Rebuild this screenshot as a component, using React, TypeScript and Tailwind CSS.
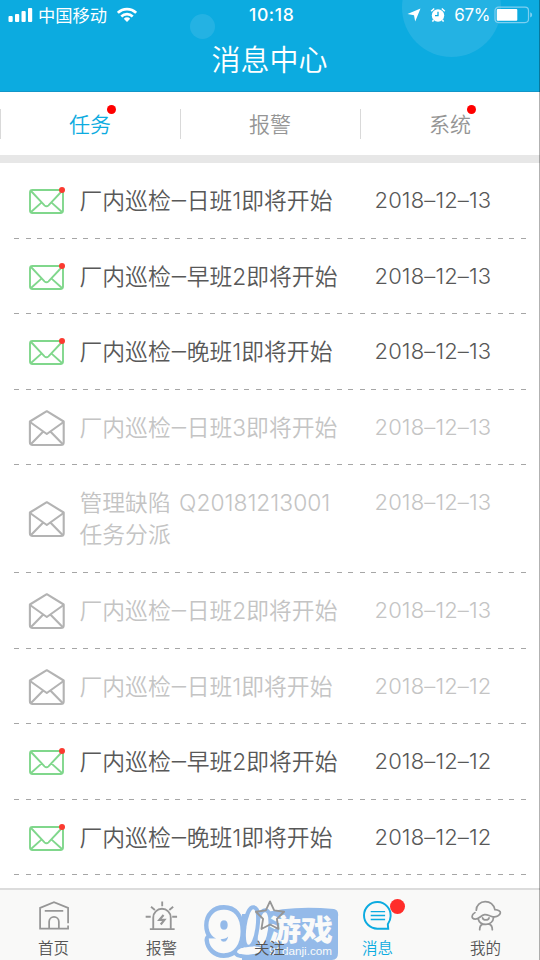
import React, { useState } from "react";
import clsx from "clsx";

interface Message {
  title: string[];
  date: string;
  read: boolean;
}

interface TabItem {
  label: string;
  dot: boolean;
}

const tabs: TabItem[] = [
  { label: "任务", dot: true },
  { label: "报警", dot: false },
  { label: "系统", dot: true },
];

const messages: Message[] = [
  { title: ["厂内巡检–日班1即将开始"], date: "2018–12–13", read: false },
  { title: ["厂内巡检–早班2即将开始"], date: "2018–12–13", read: false },
  { title: ["厂内巡检–晚班1即将开始"], date: "2018–12–13", read: false },
  { title: ["厂内巡检–日班3即将开始"], date: "2018–12–13", read: true },
  { title: ["管理缺陷 Q20181213001", "任务分派"], date: "2018–12–13", read: true },
  { title: ["厂内巡检–日班2即将开始"], date: "2018–12–13", read: true },
  { title: ["厂内巡检–日班1即将开始"], date: "2018–12–12", read: true },
  { title: ["厂内巡检–早班2即将开始"], date: "2018–12–12", read: false },
  { title: ["厂内巡检–晚班1即将开始"], date: "2018–12–12", read: false },
];

const MailIcon = () => (
  <svg width="38" height="30" viewBox="0 0 38 30" fill="none">
    <g stroke="#80d78c" strokeWidth="1.9" strokeLinejoin="round">
      <rect x="2" y="4" width="33" height="23" rx="2.5" />
      <path d="M3 5l13.5 14.3q2 2 4 0L34 5M3 26l10.7-9.6M34 26l-10.7-9.6" />
    </g>
    <circle cx="34" cy="4" r="3" fill="#fb3a30" />
  </svg>
);

const MailOpenIcon = () => (
  <svg className="my-[-4px]" width="38" height="38" viewBox="0 0 38 38" fill="none" stroke="#b3b3b3" strokeWidth="2.1" strokeLinejoin="round">
    <path d="M1.9 12.5L18.8 2.2 35.7 12.5V33.2q0 2.8-2.8 2.8H4.7Q1.9 36 1.9 33.2z" />
    <path d="M2 13l16.8 12L35.6 13M3 35l12-12.3M34.6 35l-12-12.3" />
  </svg>
);

const HomeIcon = () => (
  <svg width="36" height="36" viewBox="0 0 36 36" fill="none" stroke="#969696" strokeWidth="1.8">
    <path d="M32.5 25V9.2L18 3.4 3.7 9.2v21.2h28.8v-3.2M8.500 12.2h19M13 30v-6.5a5 5 0 0 1 10 0V30" />
  </svg>
);

const AlarmIcon = () => (
  <svg width="36" height="36" viewBox="0 0 36 36" fill="none" stroke="#969696" strokeWidth="1.9">
    <path d="M5.5 31h25.5M9 30V19a9 9 0 0 1 18 0v11M18.2 2.5v5M6.7 8l4 3.3M29.5 8l-4 3.3M1.2 18.3h5.2M28.5 18.3h5" />
    <path d="M19.6 16.5l-4.3 5h5.2l-3.8 4.7" strokeWidth="2.2" />
  </svg>
);

const StarIcon = () => (
  <svg width="36" height="36" viewBox="0 0 36 36" fill="none" stroke="#969696" strokeWidth="1.9" strokeLinejoin="round">
    <path d="M18 2.5l4.3 9.2 10.2 1.4-7.4 7.4 1.7 10.3L18 26.2l-8.8 4.6 1.7-10.3-7.4-7.4 10.2-1.4z" />
  </svg>
);

const ChatIcon = () => (
  <svg width="36" height="36" viewBox="0 0 36 36" fill="none" stroke="#0cabe0" strokeWidth="2">
    <path d="M28.5 30.5H17.5A13.7 13.7 0 1 1 31 17.5c0 3.4-1.3 6-2.9 8.5z" />
    <path d="M10.5 13h14.8M10.5 17h14.8M10.5 21h14.8" strokeWidth="1.5" />
  </svg>
);

const UserIcon = () => (
  <svg width="36" height="36" viewBox="0 0 36 36" fill="none" stroke="#969696" strokeWidth="1.8" strokeLinecap="round">
    <path d="M8 11.5C8 6.5 12 2.8 17.2 2.8c5 0 8.6 3 10 8.2 3.5.3 5.8 1.5 5.6 3.3-.3 2.5-4.3 4.6-8.3 3.8-3.5-.8-5-2.4-8-2-4 .6-5.5 4.7-9.5 4.7-2.5 0-3.7-1.8-3.2-3.6.3-1.2 1.5-2.3 2.8-3.2" />
    <path d="M10 20.5c.8 3.5 4 5.5 8 5.5s7.5-2.6 7.8-7.3M14.5 19.5c.8 2.7 5.8 2.7 6.6 0M11.5 31.5c0-3 1-4.8 3-5.7M24.5 31.5c0-3-1-4.8-3-5.7" />
  </svg>
);

const navItems = [
  { label: "首页", Icon: HomeIcon, dot: false },
  { label: "报警", Icon: AlarmIcon, dot: false },
  { label: "关注", Icon: StarIcon, dot: false },
  { label: "消息", Icon: ChatIcon, dot: true },
  { label: "我的", Icon: UserIcon, dot: false },
];

const StatusBar = () => (
  <div className="relative flex h-[30px] items-center justify-between pl-2 pr-[7px] text-white">
    <div className="flex items-center">
      <svg width="25" height="16" viewBox="0 0 25 16" fill="#fff">
        <rect x="0.5" y="9" width="4.2" height="6" rx="1" />
        <rect x="7" y="7" width="4.2" height="8" rx="1" />
        <rect x="13.5" y="4" width="4.2" height="11" rx="1" />
        <rect x="20" y="1" width="4.2" height="14" rx="1" />
      </svg>
      <span className="ml-[5px] text-[17.3px] leading-[30px]">中国移动</span>
      <svg className="ml-[10px]" width="20" height="16" viewBox="0 0 20 16" fill="none" stroke="#fff" strokeWidth="2.6">
        <path d="M.9 5.8a13 13 0 0 1 18.2 0M4.3 9.5a8 8 0 0 1 11.4 0" />
        <path d="M10 15l-3.2-3.3a4.5 4.5 0 0 1 6.4 0z" fill="#fff" stroke="none" />
      </svg>
    </div>
    <span className="absolute left-[249px] top-0 font-['Inter'] text-[17.6px] font-medium leading-[30px] tracking-[0.6px]">10:18</span>
    <div className="flex items-center">
      <svg width="14" height="14" viewBox="0 0 14 14" fill="#fff">
        <path d="M13.5.5L8.2 13.5 7 7.2.5 6z" />
      </svg>
      <svg className="ml-[9px]" width="16" height="16" viewBox="0 0 16 16" fill="none">
        <circle cx="8" cy="8.5" r="6.2" fill="#fff" />
        <path d="M1.2 4.2l3-2.7M14.8 4.2l-3-2.7M3.5 13l-1 1.7M12.5 13l1 1.7" stroke="#fff" strokeWidth="1.5" />
        <path d="M8 4.7v4H5" stroke="#0cabe0" strokeWidth="1.3" />
      </svg>
      <span className="ml-[8px] font-['Inter'] text-[17px] leading-[30px] tracking-[-0.4px]">67%</span>
      <svg className="ml-[4px]" width="39" height="18" viewBox="0 0 39 18" fill="none">
        <rect x="1" y="1.2" width="33.5" height="15.4" rx="3.5" stroke="#7dcff0" strokeWidth="1.2" />
        <rect x="2.8" y="3" width="20.5" height="11.8" rx="1" fill="#fff" />
        <path d="M36.2 6.2q2 .8 2 2.7t-2 2.7z" fill="#7dcff0" />
      </svg>
    </div>
  </div>
);

const Watermark = () => (
  <svg className="pointer-events-none absolute left-[200px] top-[9px]" width="142" height="61" viewBox="0 0 142 61">
    <path d="M60 15Q90 6 134 10q5 1 4 8v36q0 7-6 7H42V15z" fill="#94bae9" />
    <g fill="#fafaf9" stroke="#94bae9" strokeWidth="8" strokeLinejoin="round" paintOrder="stroke">
      <ellipse cx="50" cy="51.5" rx="13" ry="3.8" transform="rotate(-5 50 51)" />
      <ellipse cx="63" cy="30" rx="5" ry="17" transform="rotate(8 63 30)" />
      <ellipse cx="51" cy="28" rx="4.5" ry="18" transform="rotate(8 51 28)" />
    </g>
    <text x="8" y="52" fontSize="53" fontWeight="900" fontFamily="Inter, sans-serif" textLength="33" lengthAdjust="spacingAndGlyphs" fill="#fafaf9" stroke="#94bae9" strokeWidth="12" strokeLinejoin="round" paintOrder="stroke">9</text>
    <text x="8" y="52" fontSize="53" fontWeight="900" fontFamily="Inter, sans-serif" textLength="33" lengthAdjust="spacingAndGlyphs" fill="#fafaf9" stroke="#fafaf9" strokeWidth="2.5" aria-hidden="true">9</text>
    <text x="69" y="42" fontSize="29" fontWeight="900" fontFamily="'Noto Sans CJK SC', sans-serif" textLength="64" lengthAdjust="spacingAndGlyphs" fill="#fafaf9">游戏</text>
    <ellipse cx="50" cy="51.5" rx="13" ry="3.8" transform="rotate(-5 50 51)" fill="#fafaf9" />
    <text x="69" y="56" fontSize="11" fill="#fafaf9" fontFamily="'Liberation Sans', sans-serif" textLength="63" lengthAdjust="spacingAndGlyphs">91danji.com</text>
  </svg>
);

// the dash between the name and the shift is wider than the font gives it
const TitleLine = ({ text }: { text: string }) => {
  const [name, shift] = text.split("–");
  return (
    <div>
      {name}
      {shift && <span className="relative top-[-1px] inline-block w-[16px] scale-x-125 text-center">–</span>}
      {shift}
    </div>
  );
};

const App = () => {
  const [activeTab, setActiveTab] = useState(0);
  const [activeNav, setActiveNav] = useState(3);

  return (
    <div className="relative flex h-[960px] w-[540px] flex-col overflow-hidden bg-white font-['Noto_Sans_CJK_SC',sans-serif]">
      {/* Header */}
      <header className="relative h-[92px] shrink-0 overflow-hidden border-b border-[#1296c8] bg-[#0cabe0] text-white">
        <div className="absolute left-[190px] top-[14px] h-[25px] w-[25px] rounded-full bg-[#24b2e3]" />
        <div className="absolute left-[402px] top-[-42px] h-[99px] w-[99px] rounded-full bg-[#24b2e3]" />
        <StatusBar />
        <h1 className="relative pr-px text-center text-[29px] font-[350] leading-[57px]">消息中心</h1>
      </header>

      {/* Tabs */}
      <div className="flex h-[63px] shrink-0 items-center">
        {tabs.map((tab, index) => (
          <button
            key={tab.label}
            onClick={() => setActiveTab(index)}
            className={clsx(
              "flex h-[30px] flex-1 items-center justify-center border-l border-[#d9d9d9] pr-px text-[21px] font-[350]",
              activeTab === index ? "text-[#0cabe0]" : "text-[#959595]"
            )}
          >
            <span className="relative">
              {tab.label}
              {tab.dot && <i className="absolute right-[-5px] top-[-3px] h-[9px] w-[9px] rounded-full bg-[#ff0000]" />}
            </span>
          </button>
        ))}
      </div>
      <div className="h-2 shrink-0 bg-[#e7e7e7]" />

      {/* Message list */}
      <div className="flex-1 overflow-hidden px-[14px]">
        {messages.map((msg, index) => (
          <div key={index}>
            <div
              className={clsx(
                "flex items-start pb-[20.6px] pt-[22px] text-[22.8px] font-[350] leading-[32px]",
                msg.read ? "text-[#c4c4c4]" : "text-[#585858]"
              )}
            >
              <div className="flex w-[65.500px] items-center self-stretch pl-[14px]">
                {msg.read ? <MailOpenIcon /> : <MailIcon />}
              </div>
              <div className="w-[295px] whitespace-nowrap font-['Inter','Noto_Sans_CJK_SC',sans-serif] [word-spacing:2px]">
                {msg.title.map((line) => (
                  <TitleLine key={line} text={line} />
                ))}
              </div>
              <div className="whitespace-nowrap font-['Inter'] text-[22px] leading-[30px] tracking-[0.14px]">{msg.date}</div>
            </div>
            <div className="h-px w-[512px] bg-[repeating-linear-gradient(90deg,#a6a6a6_0_5px,transparent_5px_11.52px)]" />
          </div>
        ))}
      </div>

      {/* Bottom navigation */}
      <nav className="relative flex h-[72px] shrink-0 border-t-2 border-[#dcdcdc] bg-[#f9f9f8]">
        <Watermark />
        {navItems.map(({ label, Icon, dot }, index) => (
          <button
            key={label}
            onClick={() => setActiveNav(index)}
            className={clsx(
              "relative flex flex-1 flex-col items-center pr-px pt-[9px] text-[15.5px] font-[350] leading-[26px]",
              activeNav === index ? "text-[#0cabe0]" : "text-[#555555]"
            )}
          >
            <Icon />
            <span>{label}</span>
            {dot && <i className="absolute left-[66px] top-[9px] h-[15px] w-[15px] rounded-full bg-[#ff2d2a]" />}
          </button>
        ))}
      </nav>

      <div className="absolute right-0 top-0 h-full w-px bg-black/30" />
    </div>
  );
};

export default App;
